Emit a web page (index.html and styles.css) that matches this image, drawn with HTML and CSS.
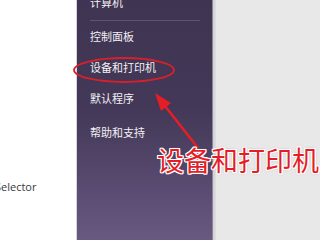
FILE: index.html
```html
<!DOCTYPE html>
<html>
<head>
<meta charset="utf-8">
<link rel="stylesheet" href="styles.css">
</head>
<body>
<div class="screen">
  <div class="left">
    <div class="selector">Selector</div>
  </div>
  <div class="panel">
    <div class="item first">计算机</div>
    <div class="sep"></div>
    <div class="item">控制面板</div>
    <div class="item">设备和打印机</div>
    <div class="item short">默认程序</div>
    <div class="item low">帮助和支持</div>
  </div>
  <div class="edge"></div>
  <div class="right"></div>
  <svg class="marks" width="320" height="240" viewBox="0 0 320 240">
    <ellipse cx="124" cy="70" rx="50" ry="12" fill="none" stroke="#d8202c" stroke-width="1.8"/>
    <line x1="198" y1="148" x2="165" y2="106" stroke="#e41e26" stroke-width="2.6"/>
    <polygon points="155,93 171,103 161,111" fill="#e41e26"/>
  </svg>
  <div class="callout">设备和打印机</div>
</div>
</body>
</html>
```
FILE: styles.css
```css
html, body {
  margin: 0;
  padding: 0;
}
body {
  width: 320px;
  height: 240px;
  overflow: hidden;
  font-family: "Noto Sans CJK SC", "Noto Sans", sans-serif;
}
.screen {
  position: relative;
  display: flex;
  width: 320px;
  height: 240px;
  overflow: hidden;
}
.left {
  width: 76px;
  background: #ffffff;
  border-right: 1px solid #d6d4da;
  flex: none;
}
.selector {
  margin-top: 180px;
  margin-left: -5px;
  font-family: "Open Sans", "Noto Sans", sans-serif;
  font-size: 11px;
  line-height: 14px;
  color: #3a3a3a;
}
.panel {
  width: 135px;
  flex: none;
  background: linear-gradient(180deg, #3f3451 0%, #433857 45%, #5a4c72 80%, #68597f 100%);
  padding-left: 13px;
  box-sizing: border-box;
  color: #f2f0f4;
  font-size: 11px;
}
.item {
  height: 31px;
  line-height: 31px;
  white-space: nowrap;
}
.item.first {
  margin-top: -6px;
  height: 16px;
  line-height: 16px;
}
.item.short {
  height: 30px;
}
.item.low {
  margin-top: 4px;
}
.sep {
  margin-top: 10px;
  width: 110px;
  height: 1px;
  background: #5d5372;
}
.edge {
  width: 4px;
  flex: none;
  background: linear-gradient(90deg, #8c8498 0px, #8c8498 1px, #cfcfd4 1px, #e0e0e2 4px);
}
.right {
  flex: 1;
  background: #e8e8e8;
}
.marks {
  position: absolute;
  left: 0;
  top: 0;
}
.callout {
  position: absolute;
  left: 157px;
  top: 146px;
  font-size: 27px;
  line-height: 27px;
  white-space: nowrap;
  color: #e61c26;
  text-shadow: 1px 0 0 #fff, -1px 0 0 #fff, 0 1px 0 #fff, 0 -1px 0 #fff,
    1px 1px 0 #fff, -1px -1px 0 #fff, 1px -1px 0 #fff, -1px 1px 0 #fff,
    0 0 3px rgba(120, 120, 120, 0.6);
}
```
